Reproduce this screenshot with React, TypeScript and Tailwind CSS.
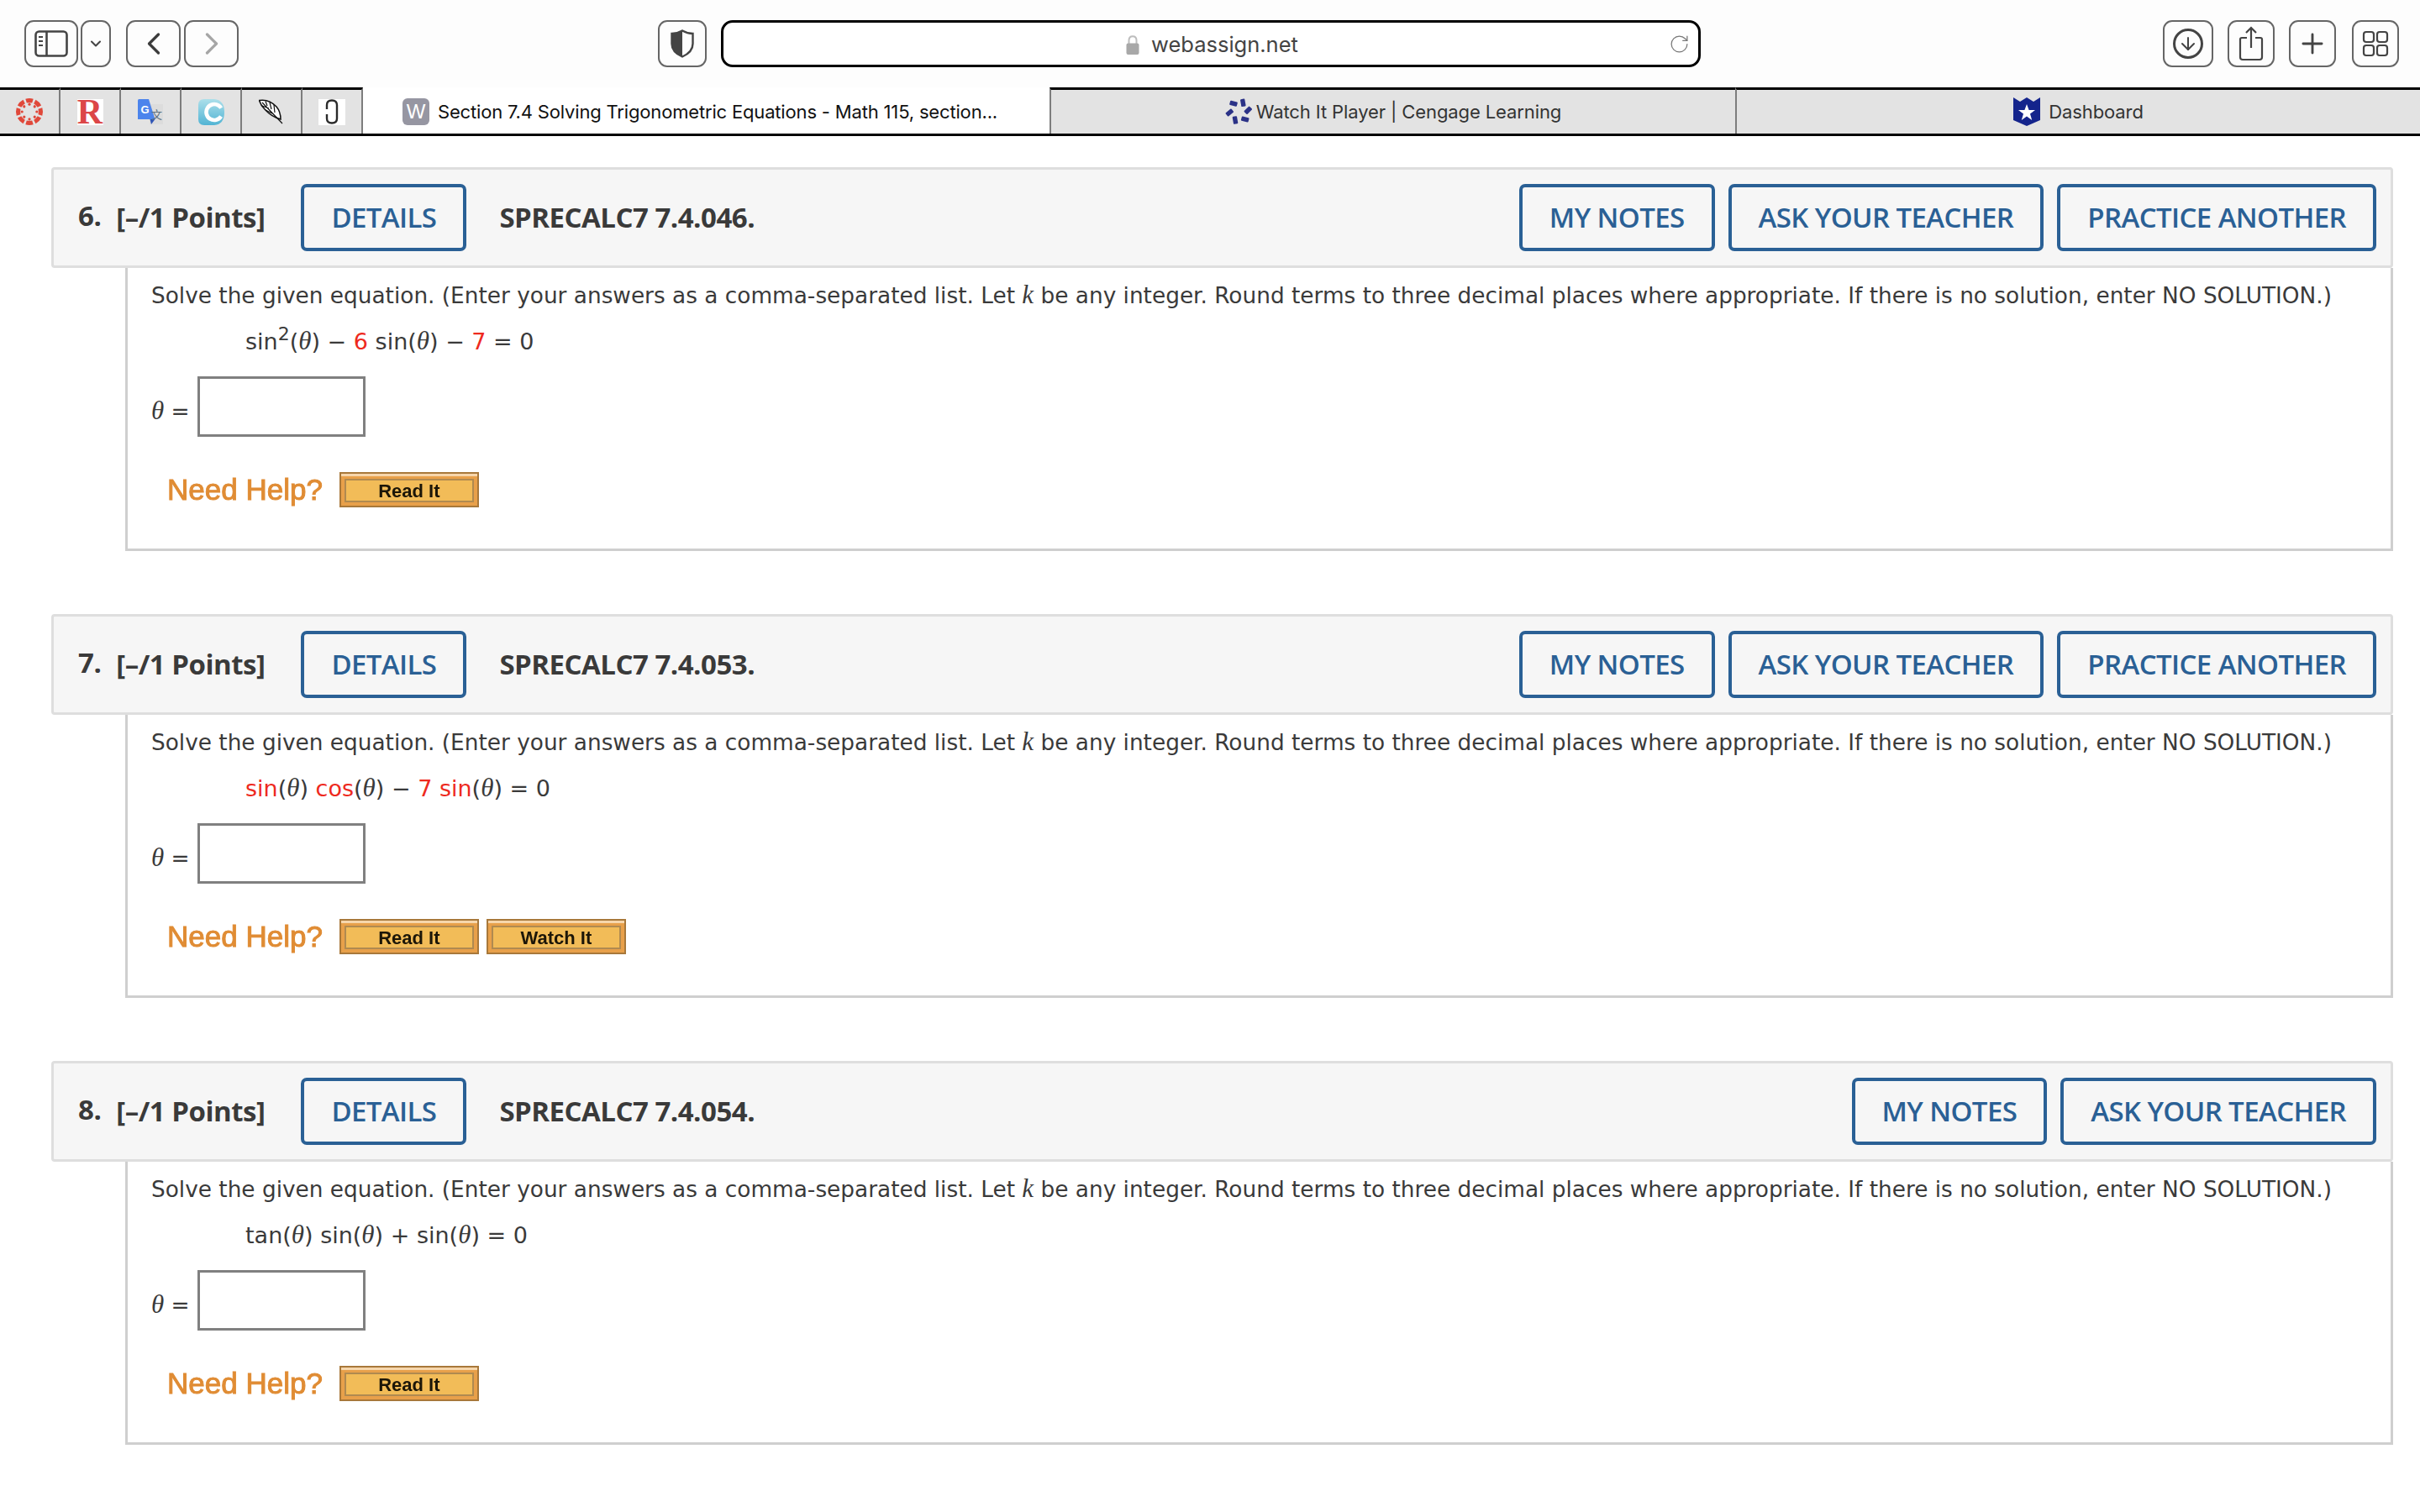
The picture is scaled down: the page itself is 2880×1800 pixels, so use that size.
import { ChevronDown, ChevronLeft, ChevronRight, RotateCw, ArrowDown, Plus } from 'lucide-react';
import type { ReactNode } from 'react';

const ToolBtn = ({ className, children }: { className: string; children: ReactNode }) => (
    <div className={`h-[56px] shrink-0 rounded-[11px] border-2 border-[#666] flex items-center justify-center text-[#444] ${className}`}>
        {children}
    </div>
);

const CanvasIcon = () => (
    <svg width="34" height="34" viewBox="0 0 34 34">
        <g fill="#e0483a">
            {[0, 45, 90, 135, 180, 225, 270, 315].map((a) => (
                <g key={a} transform={`rotate(${a} 17 17)`}>
                    <path d="M12.3 1.7 A16 16 0 0 1 21.7 1.7 L20.2 6.5 Q17 5.8 13.8 6.5 Z" />
                    <circle cx="17" cy="8.2" r="1.6" />
                </g>
            ))}
        </g>
    </svg>
);

const TranslateIcon = () => (
    <svg width="30" height="30" viewBox="0 0 30 30">
        <rect x="14" y="6" width="16" height="24" fill="#dcdcdc" />
        <path d="M1.5 0 H13 L20.5 24 H0 V1.5 Q0 0 1.5 0 Z" fill="#4c84ec" />
        <path d="M14.5 24 H20.5 L16 30 Z" fill="#2f55b8" />
        <text x="3.5" y="17" fontSize="13" fontWeight="700" fill="#fff" fontFamily="Liberation Sans, sans-serif">G</text>
        <text x="16" y="23" fontSize="13" fill="#5d7080" fontFamily="Noto Sans CJK SC, sans-serif">文</text>
    </svg>
);

const CIcon = () => (
    <svg width="31" height="31" viewBox="0 0 31 31">
        <defs>
            <linearGradient id="c-grad" x1="0" y1="0" x2="0" y2="1">
                <stop offset="0" stopColor="#acdfea" />
                <stop offset="1" stopColor="#52b4d4" />
            </linearGradient>
        </defs>
        <path d="M7 0 H19 Q31 1 31 15.5 Q31 30 19 31 H7 Q0 31 0 24 V7 Q0 0 7 0 Z" fill="url(#c-grad)" />
        <circle cx="19" cy="15.5" r="9.5" fill="none" stroke="#fff" strokeWidth="4.6" strokeDasharray="49 11" transform="rotate(32 19 15.5)" />
    </svg>
);

const FeatherIcon = () => (
    <svg width="30" height="30" viewBox="0 0 30 30">
        <path d="M0.5 1.5 Q12 -0.5 21 9 Q26 15 26 24 Q15 21 7 12 Q2 7 0.5 1.5 Z" fill="#fff" stroke="#111" strokeWidth="1.5" />
        <path d="M4 4 L28 29 M8 2.5 L10 8 M13 4 L15 12 M18 7 L19 16 M4 8 L12 11 M8 13 L18 18" stroke="#111" strokeWidth="1.2" fill="none" />
    </svg>
);

const LinkIcon = () => (
    <div className="w-[32px] h-[31px] bg-white flex items-center justify-center">
        <svg width="16" height="30" viewBox="0 0 16 30">
            <path d="M2 12 V7 Q2 1.5 8 1.5 Q14 1.5 14 7 V23 Q14 28.5 8 28.5 Q2 28.5 2 23 V18" fill="none" stroke="#2b2b2b" strokeWidth="2.4" />
        </svg>
    </div>
);

const PlayerIcon = () => (
    <svg width="32" height="32" viewBox="-16 -16 32 32" className="mr-[5px]" fill="#2b3287">
        <rect x="-2.7" y="-4.5" width="5.4" height="9" rx="1" transform="translate(5.3 -10.7) rotate(-10)" />
        <rect x="-4.5" y="-2.7" width="9" height="5.4" rx="1" transform="translate(-6 -9.7) rotate(15)" />
        <rect x="-4.5" y="-2.7" width="9" height="5.4" rx="1" transform="translate(11.3 -1.7) rotate(-45)" />
        <rect x="-4.5" y="-2.7" width="9" height="5.4" rx="1" transform="translate(7.7 9) rotate(15)" />
        <rect x="-2.7" y="-4.5" width="5.4" height="9" rx="1" transform="translate(-4 10) rotate(-10)" />
        <rect x="-4.5" y="-2.7" width="9" height="5.4" rx="1" transform="translate(-10.7 1) rotate(-40)" />
    </svg>
);

const Toolbar = () => (
    <div className="h-[104px] bg-[#fdfdfd] flex pt-[24px] pl-[29px] items-start">
        <ToolBtn className="w-[64px]">
            <svg width="40" height="32" viewBox="0 0 40 32" fill="none" stroke="#444" strokeWidth="2.6">
                <rect x="1.5" y="1.5" width="37" height="29" rx="4" />
                <path d="M14.5 2 V30" />
                <path d="M5 8 H10 M5 13 H10 M5 18 H10" strokeWidth="2" />
            </svg>
        </ToolBtn>
        <ToolBtn className="w-[36px] ml-[3px]"><ChevronDown size={20} strokeWidth={2.5} /></ToolBtn>
        <ToolBtn className="w-[65px] ml-[18px]"><ChevronLeft size={44} strokeWidth={1.8} className="text-[#3c3c3c]" /></ToolBtn>
        <ToolBtn className="w-[65px] ml-[4px]"><ChevronRight size={44} strokeWidth={1.8} className="text-[#a6a6a6]" /></ToolBtn>
        <ToolBtn className="w-[58px] ml-[499px]">
            <svg width="28" height="34" viewBox="0 0 28 34">
                <path d="M14 1.5 Q20 5 26.5 5 V17 Q26.5 27 14 32.5 Q1.5 27 1.5 17 V5 Q8 5 14 1.5 Z" fill="none" stroke="#444" strokeWidth="2.4" />
                <path d="M14 1.5 V32.5 Q1.5 27 1.5 17 V5 Q8 5 14 1.5 Z" fill="#444" />
            </svg>
        </ToolBtn>
        <div className="w-[1166px] h-[56px] ml-[17px] shrink-0 rounded-[14px] border-[3px] border-black bg-white flex items-center pl-[479px] pr-[10px]">
            <svg width="16" height="23" viewBox="0 0 16 23" className="mt-[3px]">
                <path d="M3.5 10 V6 Q3.5 1.2 8 1.2 Q12.5 1.2 12.5 6 V10" fill="none" stroke="#bdbdbd" strokeWidth="2" />
                <rect x="0.5" y="9.5" width="15" height="13.5" rx="2" fill="#a8a8a8" />
            </svg>
            <span className="ml-[14px] text-[25.5px] text-[#444] font-['Inter',sans-serif] mt-[2px]">webassign.net</span>
            <RotateCw size={25} strokeWidth={1.2} className="ml-auto text-[#777]" />
        </div>
        <ToolBtn className="w-[60px] ml-[550px]">
            <div className="w-[36px] h-[36px] rounded-full border-[3px] border-[#444] flex items-center justify-center">
                <ArrowDown size={24} strokeWidth={2} />
            </div>
        </ToolBtn>
        <ToolBtn className="w-[56px] ml-[17px]">
            <svg width="30" height="42" viewBox="0 0 30 42" fill="none" stroke="#444" strokeWidth="2.2">
                <path d="M15 26 V2 M9 8 L15 2 L21 8" />
                <path d="M10 14 H4 Q2 14 2 16 V37 Q2 40 5 40 H25 Q28 40 28 37 V16 Q28 14 26 14 H20" />
            </svg>
        </ToolBtn>
        <ToolBtn className="w-[56px] ml-[17px]"><Plus size={38} strokeWidth={1.8} /></ToolBtn>
        <ToolBtn className="w-[56px] ml-[19px]">
            <svg width="32" height="32" viewBox="0 0 32 32" fill="none" stroke="#444" strokeWidth="2.2">
                <rect x="2" y="2" width="12" height="12" rx="3" />
                <rect x="18" y="2" width="12" height="12" rx="3" />
                <rect x="2" y="18" width="12" height="12" rx="3" />
                <rect x="18" y="18" width="12" height="12" rx="3" />
            </svg>
        </ToolBtn>
    </div>
);

const PinnedTab = ({ children }: { children: ReactNode }) => (
    <div className="w-[72px] shrink-0 border-t-[3px] border-r-[2px] border-t-black border-r-[#7d7d7d] bg-[#e3e3e3] flex items-center justify-center">
        {children}
    </div>
);

const Tabs = () => (
    <div className="h-[58px] flex border-b-[3px] border-black font-['Inter',sans-serif]">
        <PinnedTab><CanvasIcon /></PinnedTab>
        <PinnedTab>
            <div className="w-[31px] h-[31px] bg-white flex items-center justify-center text-[42px] leading-[31px] font-bold text-[#dc4648] font-['Liberation_Serif',serif]">R</div>
        </PinnedTab>
        <PinnedTab><TranslateIcon /></PinnedTab>
        <PinnedTab><CIcon /></PinnedTab>
        <PinnedTab><FeatherIcon /></PinnedTab>
        <PinnedTab><LinkIcon /></PinnedTab>
        <div className="w-[817px] shrink-0 bg-white flex items-center pl-[47px] text-[22px] tracking-[-0.17px] text-[#111] pt-[3px]">
            <span className="w-[32px] h-[32px] rounded-[6px] bg-[#9696a2] text-white text-[24px] flex items-center justify-center mr-[10px] font-['Liberation_Sans',sans-serif]">W</span>
            Section 7.4 Solving Trigonometric Equations - Math 115, section...
        </div>
        <div className="w-[816px] shrink-0 border-t-[3px] border-l-[2px] border-t-black border-l-[#7d7d7d] bg-[#e3e3e3] flex items-center justify-center text-[22px] tracking-[-0.1px] text-[#333]">
            <PlayerIcon />
            Watch It Player | Cengage Learning
        </div>
        <div className="flex-1 border-t-[3px] border-l-[2px] border-t-black border-l-[#7d7d7d] bg-[#e3e3e3] flex items-center justify-center text-[22px] tracking-[-0.1px] text-[#333]">
            <svg width="32" height="34" viewBox="0 0 32 34" className="mr-[10px]">
                <path d="M0 0 L8 5 L16 0 L24 5 L32 0 V27 L16 34 L0 27 Z" fill="#14248c" />
                <path d="M16 8 L18.6 15 L26 15 L20 19.4 L22.2 27 L16 22.5 L9.8 27 L12 19.4 L6 15 L13.4 15 Z" fill="#fff" />
            </svg>
            Dashboard
        </div>
    </div>
);

const Theta = () => <i className="font-['Liberation_Serif',serif] text-[31px]">θ</i>;
const Red = ({ children }: { children: ReactNode }) => <span className="text-[#ee2a1e]">{children}</span>;

const Outline = ({ children }: { children: ReactNode }) => (
    <div className="h-[80px] shrink-0 rounded-[7px] border-[4px] border-[#2a6095] px-[32px] flex items-center text-[33px] font-semibold text-[#2a6095] tracking-[-0.6px]">
        {children}
    </div>
);

const HelpBtn = ({ label }: { label: string }) => (
    <div className="w-[166px] h-[42px] border-2 border-[#a8783a] bg-[#e8a04a] p-[4px] pt-[6px] shadow-[inset_0_3px_0_#f6d6ac]">
        <div className="h-full border-2 border-[#b08a50] bg-[#f2bc58] flex items-center justify-center text-[22px] font-bold text-[#1c1608] font-['Liberation_Sans',sans-serif] blur-[0.4px]">
            {label}
        </div>
    </div>
);

interface QuestionProps {
    num: number;
    code: string;
    practice?: boolean;
    watch?: boolean;
    equation: ReactNode;
}

const Question = ({ num, code, practice, watch, equation }: QuestionProps) => (
    <section className="font-['Open_Sans',sans-serif]">
        <div className="h-[120px] rounded-[4px] border-[3px] border-[#dedede] bg-[#f6f6f6] flex items-center pl-[29px] pr-[17px] text-[33px] font-bold text-[#3a3a3a] tracking-[-0.5px]">
            <span className="-mt-[4px]">{num}.</span>
            <span className="ml-[18px] mr-[43px]">[–/1 Points]</span>
            <Outline>DETAILS</Outline>
            <span className="ml-[39px] mr-auto">{code}</span>
            <div className="flex gap-[16px]">
                <Outline>MY NOTES</Outline>
                <Outline>ASK YOUR TEACHER</Outline>
                {practice && <Outline>PRACTICE ANOTHER</Outline>}
            </div>
        </div>
        <div className="ml-[88px] h-[337px] border-x-[3px] border-b-[3px] border-x-[#cfcfcf] border-b-[#cfcfcf] pl-[28px] font-['DejaVu_Sans',sans-serif] text-[26.35px] text-[#3a3a3a]">
            <p className="h-[61px] pt-[9px] whitespace-nowrap">
                Solve the given equation. (Enter your answers as a comma-separated list. Let <i className="font-['Liberation_Serif',serif] text-[31px]">k</i> be any integer. Round terms to three decimal places where appropriate. If there is no solution, enter NO SOLUTION.)
            </p>
            <p className="pl-[112px] h-[50px] whitespace-nowrap pt-[3px] text-[27px]">{equation}</p>
            <div className="flex items-center h-[72px] mt-[18px]">
                <span className="mt-[10px] mr-[9px]"><Theta /> =</span>
                <div className="w-[200px] h-[72px] border-[3px] border-[#808080] bg-white" />
            </div>
            <div className="flex items-center mt-[37px] ml-[19px]">
                <span className="mr-[20px] text-[35px] font-['Liberation_Sans',sans-serif] text-[#e08c34] [-webkit-text-stroke:1px_#e08c34] blur-[0.4px]">Need Help?</span>
                <div className="flex gap-[9px]">
                    <HelpBtn label="Read It" />
                    {watch && <HelpBtn label="Watch It" />}
                </div>
            </div>
        </div>
    </section>
);

export default function App() {
    return (
        <div className="min-h-screen bg-white">
            <Toolbar />
            <Tabs />
            <main className="pt-[37px] pl-[61px] pr-[32px] flex flex-col gap-[75px]">
                <Question
                    num={6}
                    code="SPRECALC7 7.4.046."
                    practice
                    equation={<>sin<sup className="text-[22px]">2</sup>(<Theta />) − <Red>6</Red> sin(<Theta />) − <Red>7</Red> = 0</>}
                />
                <Question
                    num={7}
                    code="SPRECALC7 7.4.053."
                    practice
                    watch
                    equation={<><Red>sin</Red>(<Theta />) <Red>cos</Red>(<Theta />) − <Red>7 sin</Red>(<Theta />) = 0</>}
                />
                <Question
                    num={8}
                    code="SPRECALC7 7.4.054."
                    equation={<>tan(<Theta />) sin(<Theta />) + sin(<Theta />) = 0</>}
                />
            </main>
        </div>
    );
}
